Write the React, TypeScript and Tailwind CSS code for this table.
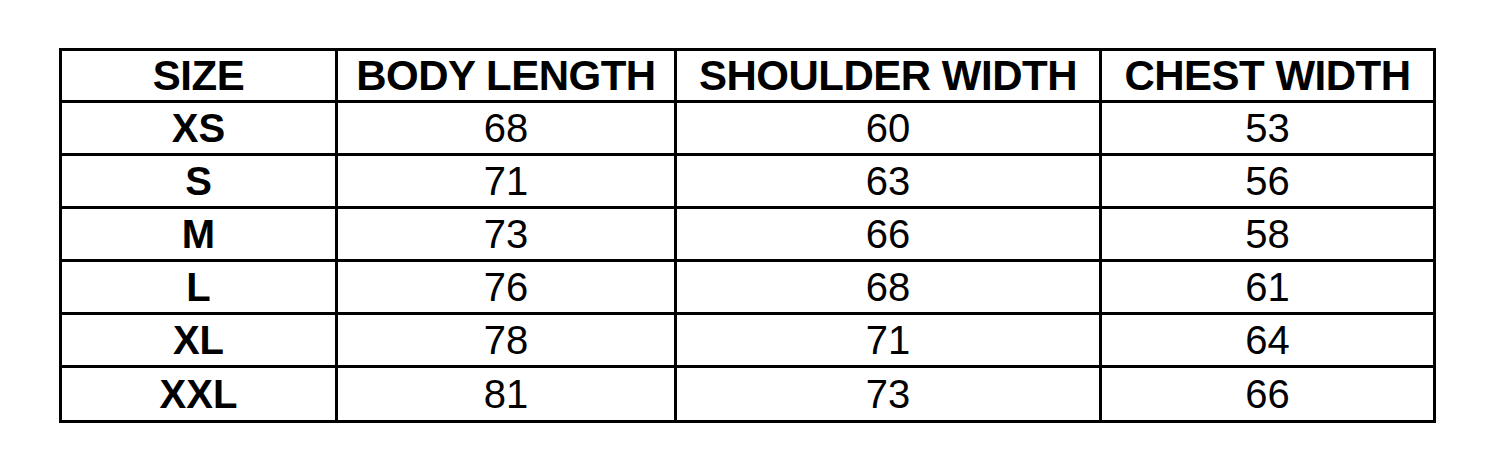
const headers = ['SIZE', 'BODY LENGTH', 'SHOULDER WIDTH', 'CHEST WIDTH'];

const rows: [string, number, number, number][] = [
  ['XS', 68, 60, 53],
  ['S', 71, 63, 56],
  ['M', 73, 66, 58],
  ['L', 76, 68, 61],
  ['XL', 78, 71, 64],
  ['XXL', 81, 73, 66],
];

function Cell({ children, last, bottom, className }: { children: React.ReactNode; last: boolean; bottom: boolean; className: string }) {
  return (
    <div
      className={`flex items-center justify-center border-black ${last ? '' : 'border-r-[3px]'} ${bottom ? 'border-b-[3px]' : ''} ${className}`}
    >
      {children}
    </div>
  );
}

export default function App() {
  return (
    <div className="min-h-[466px] w-[1512px] bg-white pt-[48px] pl-[59px] font-['Liberation_Sans',Arial,sans-serif] text-black">
      <div className="grid w-[1377px] grid-cols-[276px_339px_425px_331px] border-[3px] border-black">
        {headers.map((h, i) => (
          <Cell key={h} last={i === 3} bottom className="h-[52px]">
            <span className="text-[42px] font-bold leading-none tracking-[-0.5px]">{h}</span>
          </Cell>
        ))}
        {rows.map((row, r) => {
          const isLast = r === rows.length - 1;
          return row.map((v, c) => (
            <Cell key={`${r}-${c}`} last={c === 3} bottom={!isLast} className={isLast ? 'h-[52px]' : 'h-[53px]'}>
              {c === 0 ? (
                <span className="text-[40px] font-bold leading-none">{v}</span>
              ) : (
                <span className="text-[40px] leading-none">{v}</span>
              )}
            </Cell>
          ));
        })}
      </div>
    </div>
  );
}
